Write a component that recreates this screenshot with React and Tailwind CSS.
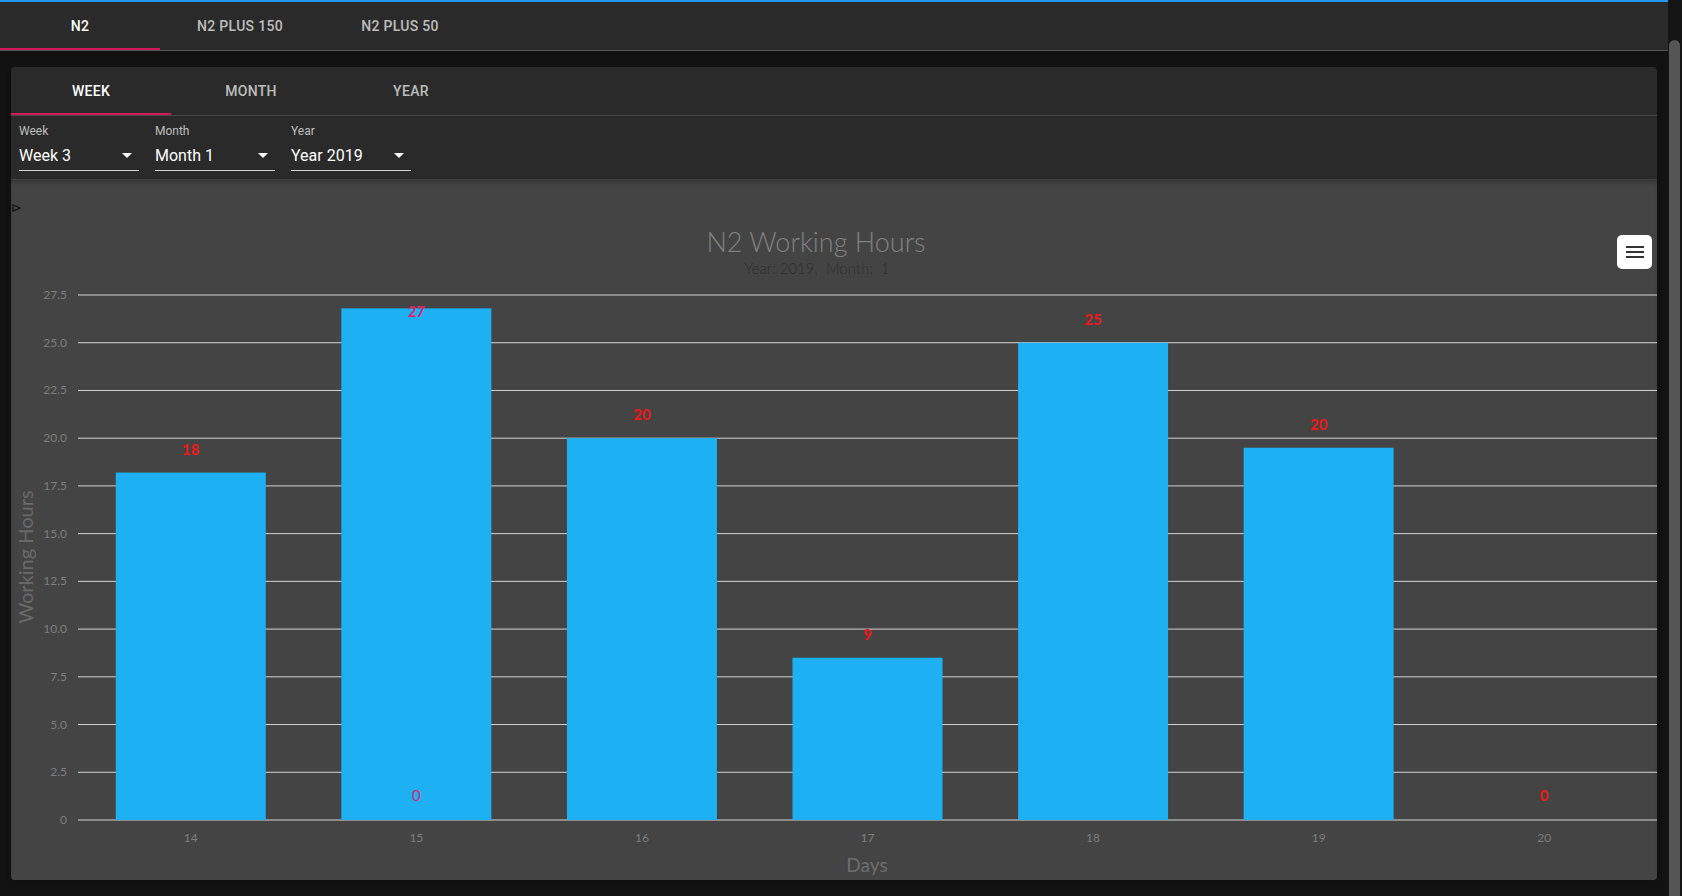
const PRODUCT_TABS = ['N2', 'N2 PLUS 150', 'N2 PLUS 50']
const PERIOD_TABS = ['WEEK', 'MONTH', 'YEAR']
const FILTERS = [
  { label: 'Week', value: 'Week 3' },
  { label: 'Month', value: 'Month 1' },
  { label: 'Year', value: 'Year 2019' },
]

const BARS = [
  { day: 14, value: 18.2, label: '18' },
  { day: 15, value: 26.8, label: '27', inside: true },
  { day: 16, value: 20, label: '20' },
  { day: 17, value: 8.5, label: '9' },
  { day: 18, value: 25, label: '25' },
  { day: 19, value: 19.5, label: '20' },
  { day: 20, value: 0, label: '0' },
]

const W = 1646
const H = 700
const X0 = 67
const Y0 = 640
const STEP = (W - X0) / 7
const BAR_W = 150
const PX = 47.727 / 2.5
const TICKS = [0, 2.5, 5, 7.5, 10, 12.5, 15, 17.5, 20, 22.5, 25, 27.5]
const CHART_FONT = "Lato, 'Liberation Sans', sans-serif"

function TabRow({ tabs, active }) {
  return (
    <div className="flex h-12">
      {tabs.map((t) => (
        <div
          key={t}
          className={`relative flex w-[160px] items-center justify-center text-sm font-medium tracking-[0.3px] ${
            t === active ? 'text-white' : 'text-white/70'
          }`}
        >
          {t}
          {t === active && <span className="absolute bottom-0 left-0 h-[2px] w-full bg-[#d3195a]" />}
        </div>
      ))}
    </div>
  )
}

function SelectField({ label, value }) {
  return (
    <div className="mx-2 flex w-[120px] flex-col">
      <div className="text-xs leading-[12px] text-white/70">{label}</div>
      <div className="flex h-[34px] items-center justify-between border-b border-white/80 pt-[3px]">
        <span className="text-base leading-[19px] text-white">{value}</span>
        <svg viewBox="0 0 24 24" className="h-6 w-6 fill-white">
          <path d="M7 10l5 5 5-5z" />
        </svg>
      </div>
    </div>
  )
}

function Chart() {
  return (
    <svg width={W} height={H} viewBox={`0 0 ${W} ${H}`} fontFamily={CHART_FONT} className="block">
      <text x={805} y={72} textAnchor="middle" fontSize="27" fontWeight="300" fill="#808080">
        N2 Working Hours
      </text>
      <text x={806} y={94} textAnchor="middle" fontSize="15" fontWeight="300" fill="#2e2e2e" style={{ whiteSpace: 'pre' }}>
        {'Year: 2019,  Month:  1'}
      </text>

      {TICKS.map((t) => {
        const y = Y0 - t * PX
        return (
          <g key={t}>
            <line x1={X0} x2={W} y1={y} y2={y} stroke="#d4d4d4" strokeWidth="1" />
            <text x={56} y={y + 4} textAnchor="end" fontSize="12" fill="#7e7e7e">
              {t === 0 ? '0' : t.toFixed(1)}
            </text>
          </g>
        )
      })}

      <text
        x={17}
        y={377}
        textAnchor="middle"
        fontSize="20"
        fill="#6a6a6a"
        transform="rotate(-90 17 377)"
        dominantBaseline="middle"
      >
        Working Hours
      </text>

      {BARS.map((b, i) => {
        const cx = X0 + STEP * i + STEP / 2
        const top = Y0 - b.value * PX
        return (
          <g key={b.day}>
            {b.value > 0 && <rect x={cx - BAR_W / 2} y={top} width={BAR_W} height={Y0 - top} fill="#1db0f3" />}
            <text
              x={cx}
              y={b.inside ? top + 9 : b.value > 0 ? top - 18 : 621}
              textAnchor="middle"
              fontSize="15"
              fontWeight="700"
              fill={b.inside ? '#e0246a' : '#f01818'}
            >
              {b.label}
            </text>
            <text x={cx} y={662} textAnchor="middle" fontSize="12" fill="#7e7e7e">
              {b.day}
            </text>
          </g>
        )
      })}

      <text x={X0 + STEP * 1.5} y={621} textAnchor="middle" fontSize="15" fill="#e0246a">
        0
      </text>

      <text x={856} y={692} textAnchor="middle" fontSize="19" fill="#6e6e6e">
        Days
      </text>
    </svg>
  )
}

export default function App() {
  return (
    <div className="flex h-[896px] w-full overflow-hidden bg-[#121212] font-[Roboto,'Liberation_Sans',sans-serif]">
      <div className="flex min-w-0 flex-1 flex-col">
        <div className="h-[2px] bg-[#2196f3]" />
        <div className="border-b border-[#555] bg-[#2a2a2a]">
          <TabRow tabs={PRODUCT_TABS} active="N2" />
        </div>

        <div className="px-[11px] pt-4">
          <div className="w-[1646px] overflow-hidden rounded bg-[#2a2a2a] shadow-md">
            <div className="border-b border-[#474747]">
              <TabRow tabs={PERIOD_TABS} active="WEEK" />
            </div>

            <div className="flex h-16 items-start border-b border-[#3e3e3e] pt-[9px]">
              {FILTERS.map((f) => (
                <SelectField key={f.label} label={f.label} value={f.value} />
              ))}
            </div>

            <div className="relative bg-[#444444] shadow-[inset_0_4px_4px_-2px_rgba(0,0,0,0.25)]">
              <Chart />
              <svg viewBox="0 0 10 10" className="absolute left-[1px] top-[23px] h-[10px] w-[10px]">
                <polygon points="1,2 8,5 1,8" fill="none" stroke="#111" strokeWidth="1.2" />
              </svg>
              <button
                type="button"
                aria-label="Chart menu"
                className="absolute right-[5px] top-[55px] flex h-[34px] w-[35px] items-center justify-center rounded-[5px] bg-white"
              >
                <svg viewBox="0 0 18 14" className="h-[14px] w-[18px]" stroke="#333" strokeWidth="2">
                  <line x1="0" x2="18" y1="2" y2="2" />
                  <line x1="0" x2="18" y1="7" y2="7" />
                  <line x1="0" x2="18" y1="12" y2="12" />
                </svg>
              </button>
            </div>
          </div>
        </div>
      </div>

      <div className="relative w-[14px] bg-[#141414]">
        <div className="absolute left-[1px] top-[40px] h-[880px] w-[11px] rounded-full bg-[#555]" />
      </div>
    </div>
  )
}
